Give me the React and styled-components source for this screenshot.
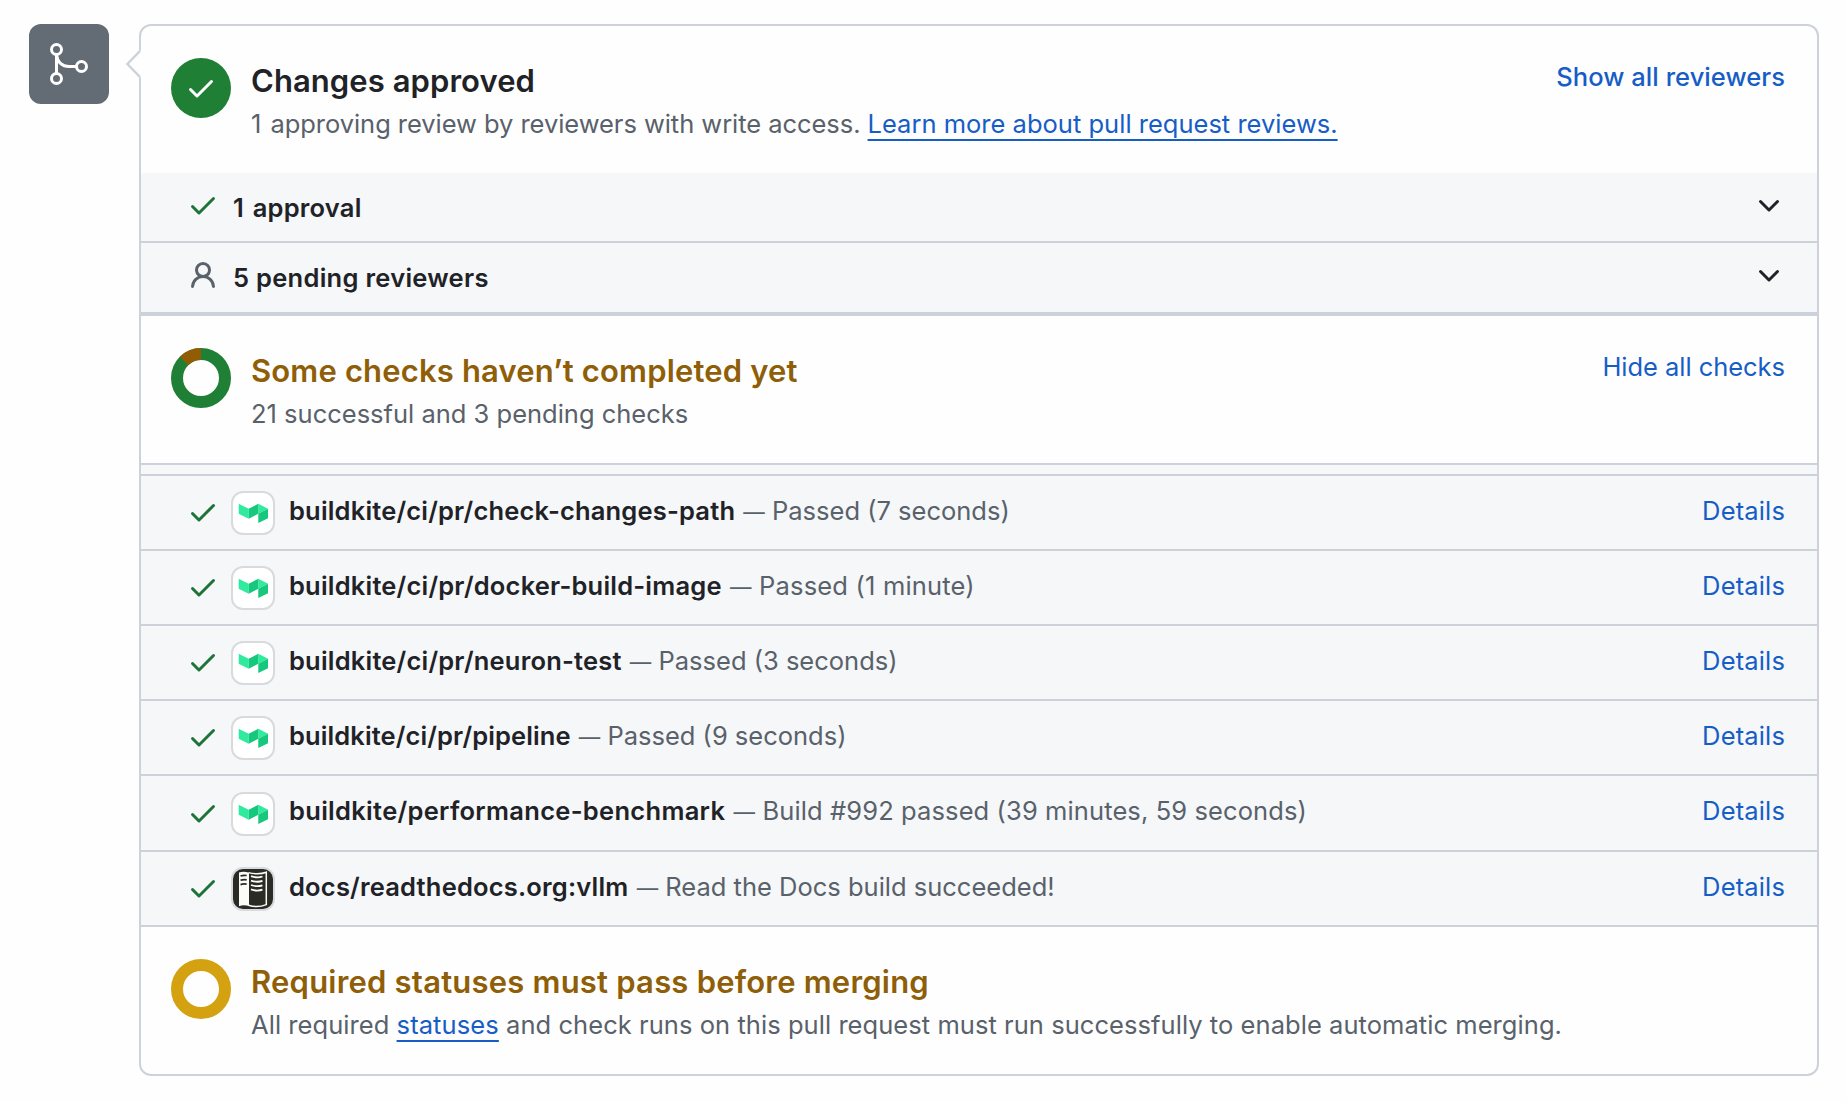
import React from "react";
import styled, { createGlobalStyle } from "styled-components";

const color = {
  text: "#1f2227",
  muted: "#59616a",
  link: "#165dc6",
  border: "#cdd2da",
  subtle: "#f5f7f9",
  green: "#1f7f35",
  checkGreen: "#1e7336",
  attention: "#8f5e08",
  amber: "#d4a111",
};

const GlobalStyle = createGlobalStyle`
  body {
    margin: 0;
    background: #fefefe;
    color: ${color.text};
    font-family: Inter, "Liberation Sans", sans-serif;
    font-size: 25.5px;
  }
  * { box-sizing: border-box; }
`;

const Page = styled.main`
  display: flex;
  align-items: flex-start;
  gap: 30px;
  width: 1846px;
  height: 1102px;
  padding: 24px 27px 26px 29px;
  white-space: nowrap;
`;

const MergeBadge = styled.div`
  flex: none;
  width: 80px;
  height: 80px;
  border-radius: 12px;
  background: #636b75;
`;

const Panel = styled.section`
  position: relative;
  flex: 1;
  border: 2px solid ${color.border};
  border-radius: 12px;
  background: #fefefe;
`;

const Caret = styled.svg`
  position: absolute;
  top: 23px;
  left: -16px;
`;

const Section = styled.header`
  display: flex;
  align-items: flex-start;
  gap: 20px;
  height: 147px;
  padding: 32px 32px 0 30px;
`;

const SectionText = styled.div`
  flex: 1;
`;

const Title = styled.h3`
  margin: 0;
  font-size: 31px;
  font-weight: 600;
  line-height: 45px;
  letter-spacing: ${(p) => p.$track || 0}px;
  color: ${(p) => (p.$attention ? color.attention : color.text)};
`;

const Description = styled.p`
  margin: 0;
  line-height: 41px;
  letter-spacing: ${(p) => p.$track || 0}px;
  color: ${color.muted};
`;

const InlineLink = styled.a`
  color: ${color.link};
  letter-spacing: ${(p) => p.$track || 0}px;
  text-decoration: underline 2px;
  text-underline-offset: 6px;
  text-decoration-skip-ink: none;
`;

const Action = styled.a`
  line-height: 37px;
  letter-spacing: ${(p) => p.$track || 0}px;
  font-weight: ${(p) => p.$weight || 400};
  color: ${color.link};
`;

const RoundStatus = styled.div`
  display: grid;
  place-items: center;
  flex: none;
  width: 60px;
  height: 60px;
  border-radius: 50%;
  background: ${color.green};
  color: #fff;
`;

const Icon = styled.svg`
  display: block;
  flex: none;
  fill: currentColor;
  color: ${(p) => p.$color || "inherit"};
`;

const Digit = styled.span`
  margin-right: 2px;
`;

const ReviewRow = styled.div`
  display: flex;
  align-items: center;
  height: ${(p) => p.$height}px;
  padding: 0 32px 0 46px;
  border-bottom: ${(p) => p.$line}px solid ${color.border};
  background: ${color.subtle};

  ${Icon}:first-child { margin-bottom: 4px; }
  ${Icon}:last-child { margin-bottom: 3px; }
`;

const ReviewLabel = styled.span`
  flex: 1;
  padding-left: 14px;
  font-weight: 600;
  letter-spacing: ${(p) => p.$track}px;
`;

const Divider = styled.div`
  height: 13px;
  border: solid ${color.border};
  border-width: 2px 0;
  background: ${color.subtle};
`;

const CheckRow = styled.div`
  display: flex;
  align-items: center;
  height: ${(p) => 75 + p.$extra}px;
  padding: 0 32px 0 46px;
  border-bottom: 2px solid ${color.border};
  background: ${color.subtle};

  > ${Icon} { margin-bottom: 1px; }
`;

const Avatar = styled.div`
  flex: none;
  width: 44px;
  height: 44px;
  margin: 1px 14px 0 12px;
  overflow: hidden;
  border: 2px solid #d8dadc;
  border-radius: 12px;
  background: ${(p) => (p.$dark ? "#2b2b26" : "#fff")};
`;

const CheckText = styled.div`
  flex: 1;
  padding-bottom: 5px;
  letter-spacing: ${(p) => p.$track || 0}px;
  color: ${color.muted};
`;

const CheckName = styled.strong`
  margin-right: 1px;
  font-weight: 600;
  letter-spacing: ${(p) => p.$track}px;
  color: ${color.text};
`;

const Dash = styled.span`
  font-size: 21.5px;
`;

const DetailsLink = styled.a`
  padding-bottom: 5px;
  letter-spacing: 0.15px;
  color: ${color.link};
`;

const CHECK =
  "M13.78 4.22a.75.75 0 0 1 0 1.06l-7.25 7.25a.75.75 0 0 1-1.06 0L2.22 9.28a.751.751 0 0 1 .018-1.042.751.751 0 0 1 1.042-.018L6 10.94l6.72-6.72a.75.75 0 0 1 1.06 0Z";
const CHEVRON =
  "M12.78 5.22a.749.749 0 0 1 0 1.06l-4.25 4.25a.749.749 0 0 1-1.06 0L3.22 6.28a.749.749 0 1 1 1.06-1.06L8 8.939l3.72-3.719a.749.749 0 0 1 1.06 0Z";
const PERSON =
  "M10.561 8.073a6.005 6.005 0 0 1 3.432 5.142.75.75 0 1 1-1.498.07 4.5 4.5 0 0 0-8.99 0 .75.75 0 0 1-1.498-.07 6.004 6.004 0 0 1 3.431-5.142 3.999 3.999 0 1 1 5.123 0ZM10.5 5a2.5 2.5 0 1 0-5 0 2.5 2.5 0 0 0 5 0Z";

const Octicon = ({ path, tint }) => (
  <Icon width="32" height="32" viewBox="0 0 16 16" $color={tint}>
    <path d={path} />
  </Icon>
);

const Donut = ({ base, slice }) => (
  <Icon width="60" height="60" viewBox="0 0 60 60">
    <circle cx="30" cy="30" r="24" fill="none" stroke={base} strokeWidth="12" />
    {slice && (
      <path d="M13.03 13.03A24 24 0 0 1 30 6" fill="none" stroke={slice} strokeWidth="12" />
    )}
  </Icon>
);

const MergeIcon = () => (
  <svg width="80" height="80" viewBox="0 0 80 80" fill="none" stroke="#fff" strokeWidth="3">
    <circle cx="27.5" cy="25.5" r="5" />
    <circle cx="27.5" cy="54.5" r="5" />
    <circle cx="52.5" cy="42.5" r="5" />
    <path d="M27.5 30.5V49.5M27.5 31C28.5 38 33 42.5 40 42.5H47.5" />
  </svg>
);

const BuildkiteLogo = () => (
  <svg width="40" height="40" viewBox="2 2 40 40">
    <path fill="#30eb9d" d="M7.7 12.7l10 5v10l-10-5zM27.3 12.7l9.7 5-9.7 5z" />
    <path fill="#15c87c" d="M17.7 17.7l9.6-5v10l-9.6 5zM37 17.7v9.6L27.3 32v-9.3z" />
  </svg>
);

const DocsLogo = () => (
  <svg width="40" height="40" viewBox="2 2 40 40" fill="none">
    <path fill="#fbfbf8" d="M8 5.6C11 4.4 15 4.600 18 5.800V39c-3-1-7-1.200-10 .2z" />
    <path
      stroke="#fbfbf8"
      strokeWidth="1.5"
      d="M17.500 5.600C22 7.200 30 7.200 35.300 5.200V37.600C30 39.800 23 40 17.500 38.300"
    />
    <path
      stroke="#fbfbf8"
      strokeWidth="1.8"
      d="M20 9.200c4 1.400 8 1.500 11.500.3M20 13.600c4 1.400 8 1.500 11.500.3M20 18c4 1.400 8 1.500 11.500.3M20 22.400c4 1.400 8 1.500 11.500.3"
    />
    <path
      stroke="#2b2b26"
      strokeWidth="1.7"
      d="M9.500 9c2-.8 4-.9 6.200-.5M9.500 13.300c2-.8 4-.9 6.200-.5M9.500 17.600c2-.8 4-.9 6.200-.5"
    />
  </svg>
);

const checks = [
  { name: "buildkite/ci/pr/check-changes-path", result: "Passed (7 seconds)", track: 0.18 },
  {
    name: "buildkite/ci/pr/docker-build-image",
    result: "Passed (1 minute)",
    track: 0.2,
    resultTrack: 0.18,
  },
  { name: "buildkite/ci/pr/neuron-test", result: "Passed (3 seconds)", track: 0.2 },
  { name: "buildkite/ci/pr/pipeline", result: "Passed (9 seconds)", track: 0.1 },
  {
    name: "buildkite/performance-benchmark",
    result: "Build #992 passed (39 minutes, 59 seconds)",
    track: 0.3,
    resultTrack: 0.11,
    extra: 1,
  },
  { name: "docs/readthedocs.org:vllm", result: "Read the Docs build succeeded!", track: 0.2, docs: true },
];

export default function App() {
  return (
    <>
      <GlobalStyle />
      <Page>
        <MergeBadge>
          <MergeIcon />
        </MergeBadge>
        <Panel>
          <Caret width="16" height="30" viewBox="0 0 16 30">
            <path d="M16 1L2 15L16 29Z" fill="#fefefe" />
            <path d="M15 2L2.400 15L15 28" fill="none" stroke={color.border} strokeWidth="2.400" />
          </Caret>

          <Section>
            <RoundStatus>
              <Octicon path={CHECK} />
            </RoundStatus>
            <SectionText>
              <Title $track={0.07}>Changes approved</Title>
              <Description $track={-0.05}>
                <Digit>1</Digit> approving review by reviewers with write access.{" "}
                <InlineLink $track={0.01}>Learn more about pull request reviews.</InlineLink>
              </Description>
            </SectionText>
            <Action $track={0.06} $weight={500}>
              Show all reviewers
            </Action>
          </Section>

          <ReviewRow $height={70} $line={2}>
            <Octicon path={CHECK} tint={color.checkGreen} />
            <ReviewLabel $track={0.22}>
              <Digit>1</Digit> approval
            </ReviewLabel>
            <Octicon path={CHEVRON} />
          </ReviewRow>
          <ReviewRow $height={73} $line={4}>
            <Octicon path={PERSON} tint={color.muted} />
            <ReviewLabel $track={0.28}>5 pending reviewers</ReviewLabel>
            <Octicon path={CHEVRON} />
          </ReviewRow>

          <Section>
            <Donut base={color.green} slice="#925c04" />
            <SectionText>
              <Title $attention $track={0.16}>
                Some checks haven’t completed yet
              </Title>
              <Description>21 successful and 3 pending checks</Description>
            </SectionText>
            <Action $track={-0.04}>Hide all checks</Action>
          </Section>

          <Divider />
          {checks.map((check) => (
            <CheckRow key={check.name} $extra={check.extra || 0}>
              <Octicon path={CHECK} tint={color.checkGreen} />
              <Avatar $dark={check.docs}>{check.docs ? <DocsLogo /> : <BuildkiteLogo />}</Avatar>
              <CheckText $track={check.resultTrack}>
                <CheckName $track={check.track}>{check.name}</CheckName> <Dash>—</Dash> {check.result}
              </CheckText>
              <DetailsLink>Details</DetailsLink>
            </CheckRow>
          ))}

          <Section>
            <Donut base={color.amber} />
            <SectionText>
              <Title $attention $track={0.21}>
                Required statuses must pass before merging
              </Title>
              <Description $track={0.055}>
                All required <InlineLink $track={0.1}>statuses</InlineLink> and check runs on this pull
                request must run successfully to enable automatic merging.
              </Description>
            </SectionText>
          </Section>
        </Panel>
      </Page>
    </>
  );
}
